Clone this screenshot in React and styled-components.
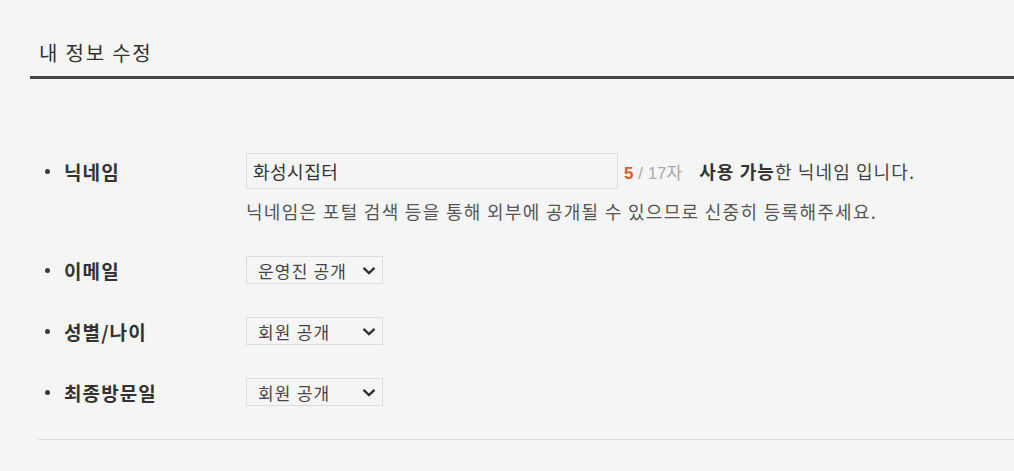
import styled, { createGlobalStyle } from 'styled-components'

const GlobalStyle = createGlobalStyle`
   html, body {
      margin: 0;
      padding: 0;
      background: #f5f5f5;
   }
   body {
      font-family: 'Noto Sans CJK KR', 'Noto Sans', sans-serif;
      color: #333;
   }
`

const Page = styled.div`
   width: 1014px;
   height: 471px;
   padding-left: 30px;
   box-sizing: border-box;
   background: #f5f5f5;
   overflow: hidden;
`

const Header = styled.div`
   padding: 40px 0 10px 9px;
   border-bottom: 3px solid #454545;
`

const Title = styled.h2`
   margin: 0;
   font-size: 20px;
   line-height: 26px;
   font-weight: 400;
   letter-spacing: 1.8px;
   color: #333;
`

const List = styled.div`
   display: flex;
   flex-direction: column;
   gap: 33px;
   padding-top: 74px;
`

const Row = styled.div`
   display: flex;
   align-items: flex-start;
`

const Label = styled.div`
   width: 216px;
   padding-left: 15px;
   box-sizing: border-box;
   display: flex;
   align-items: center;
   height: ${({ $h }) => $h}px;
   font-size: 19px;
   font-weight: 700;
   letter-spacing: 1.1px;
   color: #333;
`

const Bullet = styled.span`
   width: 5px;
   height: 5px;
   border-radius: 50%;
   background: #3a3a3a;
   margin-right: 14px;
`

const Field = styled.div`
   display: flex;
   flex-direction: column;
`

const InputLine = styled.div`
   display: flex;
   align-items: center;
`

const Input = styled.div`
   width: 372px;
   height: 36px;
   box-sizing: border-box;
   border: 1px solid #dcdcdc;
   padding: 0 6px;
   display: flex;
   align-items: center;
   font-size: 18px;
   letter-spacing: 0.5px;
   color: #333;
`

const Count = styled.span`
   margin-left: 6px;
   font-size: 17px;
   font-family: 'Liberation Sans', 'Noto Sans CJK KR', sans-serif;
   color: #aaa;
   b {
      color: #e5562b;
      font-weight: 700;
   }
`

const Status = styled.span`
   margin-left: 17px;
   font-size: 18px;
   letter-spacing: 1.1px;
   color: #444;
   b {
      color: #333;
      font-weight: 700;
   }
`

const Help = styled.p`
   margin: 10px 0 0;
   font-size: 18px;
   line-height: 24px;
   letter-spacing: 1.3px;
   color: #555;
`

const Select = styled.div`
   width: 137px;
   height: 28px;
   box-sizing: border-box;
   border: 1px solid #dcdcdc;
   padding: 0 6px 0 11px;
   display: flex;
   align-items: center;
   justify-content: space-between;
   font-size: 17px;
   letter-spacing: 1.2px;
   color: #444;
`

const Chevron = () => (
   <svg width="14" height="9" viewBox="0 0 14 9">
      <path d="M1.5 1.8 L7 7 L12.5 1.8" fill="none" stroke="#333" strokeWidth="2.4" />
   </svg>
)

const Divider = styled.div`
   margin: 33px 0 0 8px;
   height: 1px;
   background: #dcdcdc;
`

const privacy = [
   { label: '이메일', value: '운영진 공개' },
   { label: '성별/나이', value: '회원 공개' },
   { label: '최종방문일', value: '회원 공개' },
]

const App = () => {
   return (
      <Page>
         <GlobalStyle />
         <Header>
            <Title>내 정보 수정</Title>
         </Header>
         <List>
            <Row>
               <Label $h={36}>
                  <Bullet />
                  닉네임
               </Label>
               <Field>
                  <InputLine>
                     <Input>화성시집터</Input>
                     <Count>
                        <b>5</b> / 17자
                     </Count>
                     <Status>
                        <b>사용 가능</b>한 닉네임 입니다.
                     </Status>
                  </InputLine>
                  <Help>닉네임은 포털 검색 등을 통해 외부에 공개될 수 있으므로 신중히 등록해주세요.</Help>
               </Field>
            </Row>
            {privacy.map((item) => (
               <Row key={item.label}>
                  <Label $h={28}>
                     <Bullet />
                     {item.label}
                  </Label>
                  <Select>
                     {item.value}
                     <Chevron />
                  </Select>
               </Row>
            ))}
         </List>
         <Divider />
      </Page>
   )
}

export default App
